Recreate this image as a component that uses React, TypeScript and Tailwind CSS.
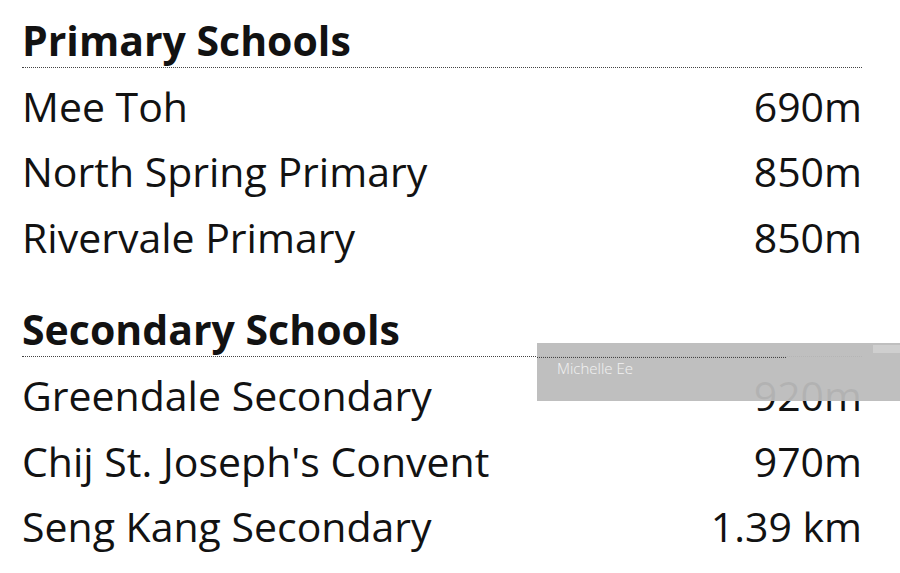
import React from "react"

const primary = [
    { name: "Mee Toh", dist: "690m" },
    { name: "North Spring Primary", dist: "850m" },
    { name: "Rivervale Primary", dist: "850m" },
]

const secondary = [
    { name: "Greendale Secondary", dist: "920m" },
    { name: "Chij St. Joseph's Convent", dist: "970m" },
    { name: "Seng Kang Secondary", dist: "1.39 km" },
]

function Section({ title, items, className }: { title: string; items: { name: string; dist: string }[]; className?: string }) {
    return (
        <div className={className}>
            <h2 className="text-[41px] font-bold leading-[48px] pb-[3px] border-b border-dotted border-[#444]">
                {title}
            </h2>
            <div className="pt-[6px]">
                {items.map((item) => (
                    <div key={item.name} className="flex justify-between text-[41px] leading-[65.5px]">
                        <span>{item.name}</span>
                        <span>{item.dist}</span>
                    </div>
                ))}
            </div>
        </div>
    )
}

export default function App() {
    return (
        <div className="relative w-[900px] h-[573px] overflow-hidden bg-white text-[#121212] font-['Open_Sans',sans-serif] pl-[22px] pr-[38px] pt-[15.5px]">
            <Section title="Primary Schools" items={primary} />
            <Section title="Secondary Schools" items={secondary} className="mt-[35px]" />
            {/* watermark overlay */}
            <div className="absolute left-[537px] top-[343px] w-[363px] h-[58px] bg-[#bcbcbc]/95">
                <div className="absolute left-0 top-[14px] w-[249px] border-b border-dotted border-[#444]" />
                <span className="absolute left-[20px] top-[14px] text-[15px] font-light text-white/80">Michelle Ee</span>
                <div className="absolute right-0 top-[2px] w-[27px] h-[8px] bg-[#cfcfcf]" />
            </div>
        </div>
    )
}
